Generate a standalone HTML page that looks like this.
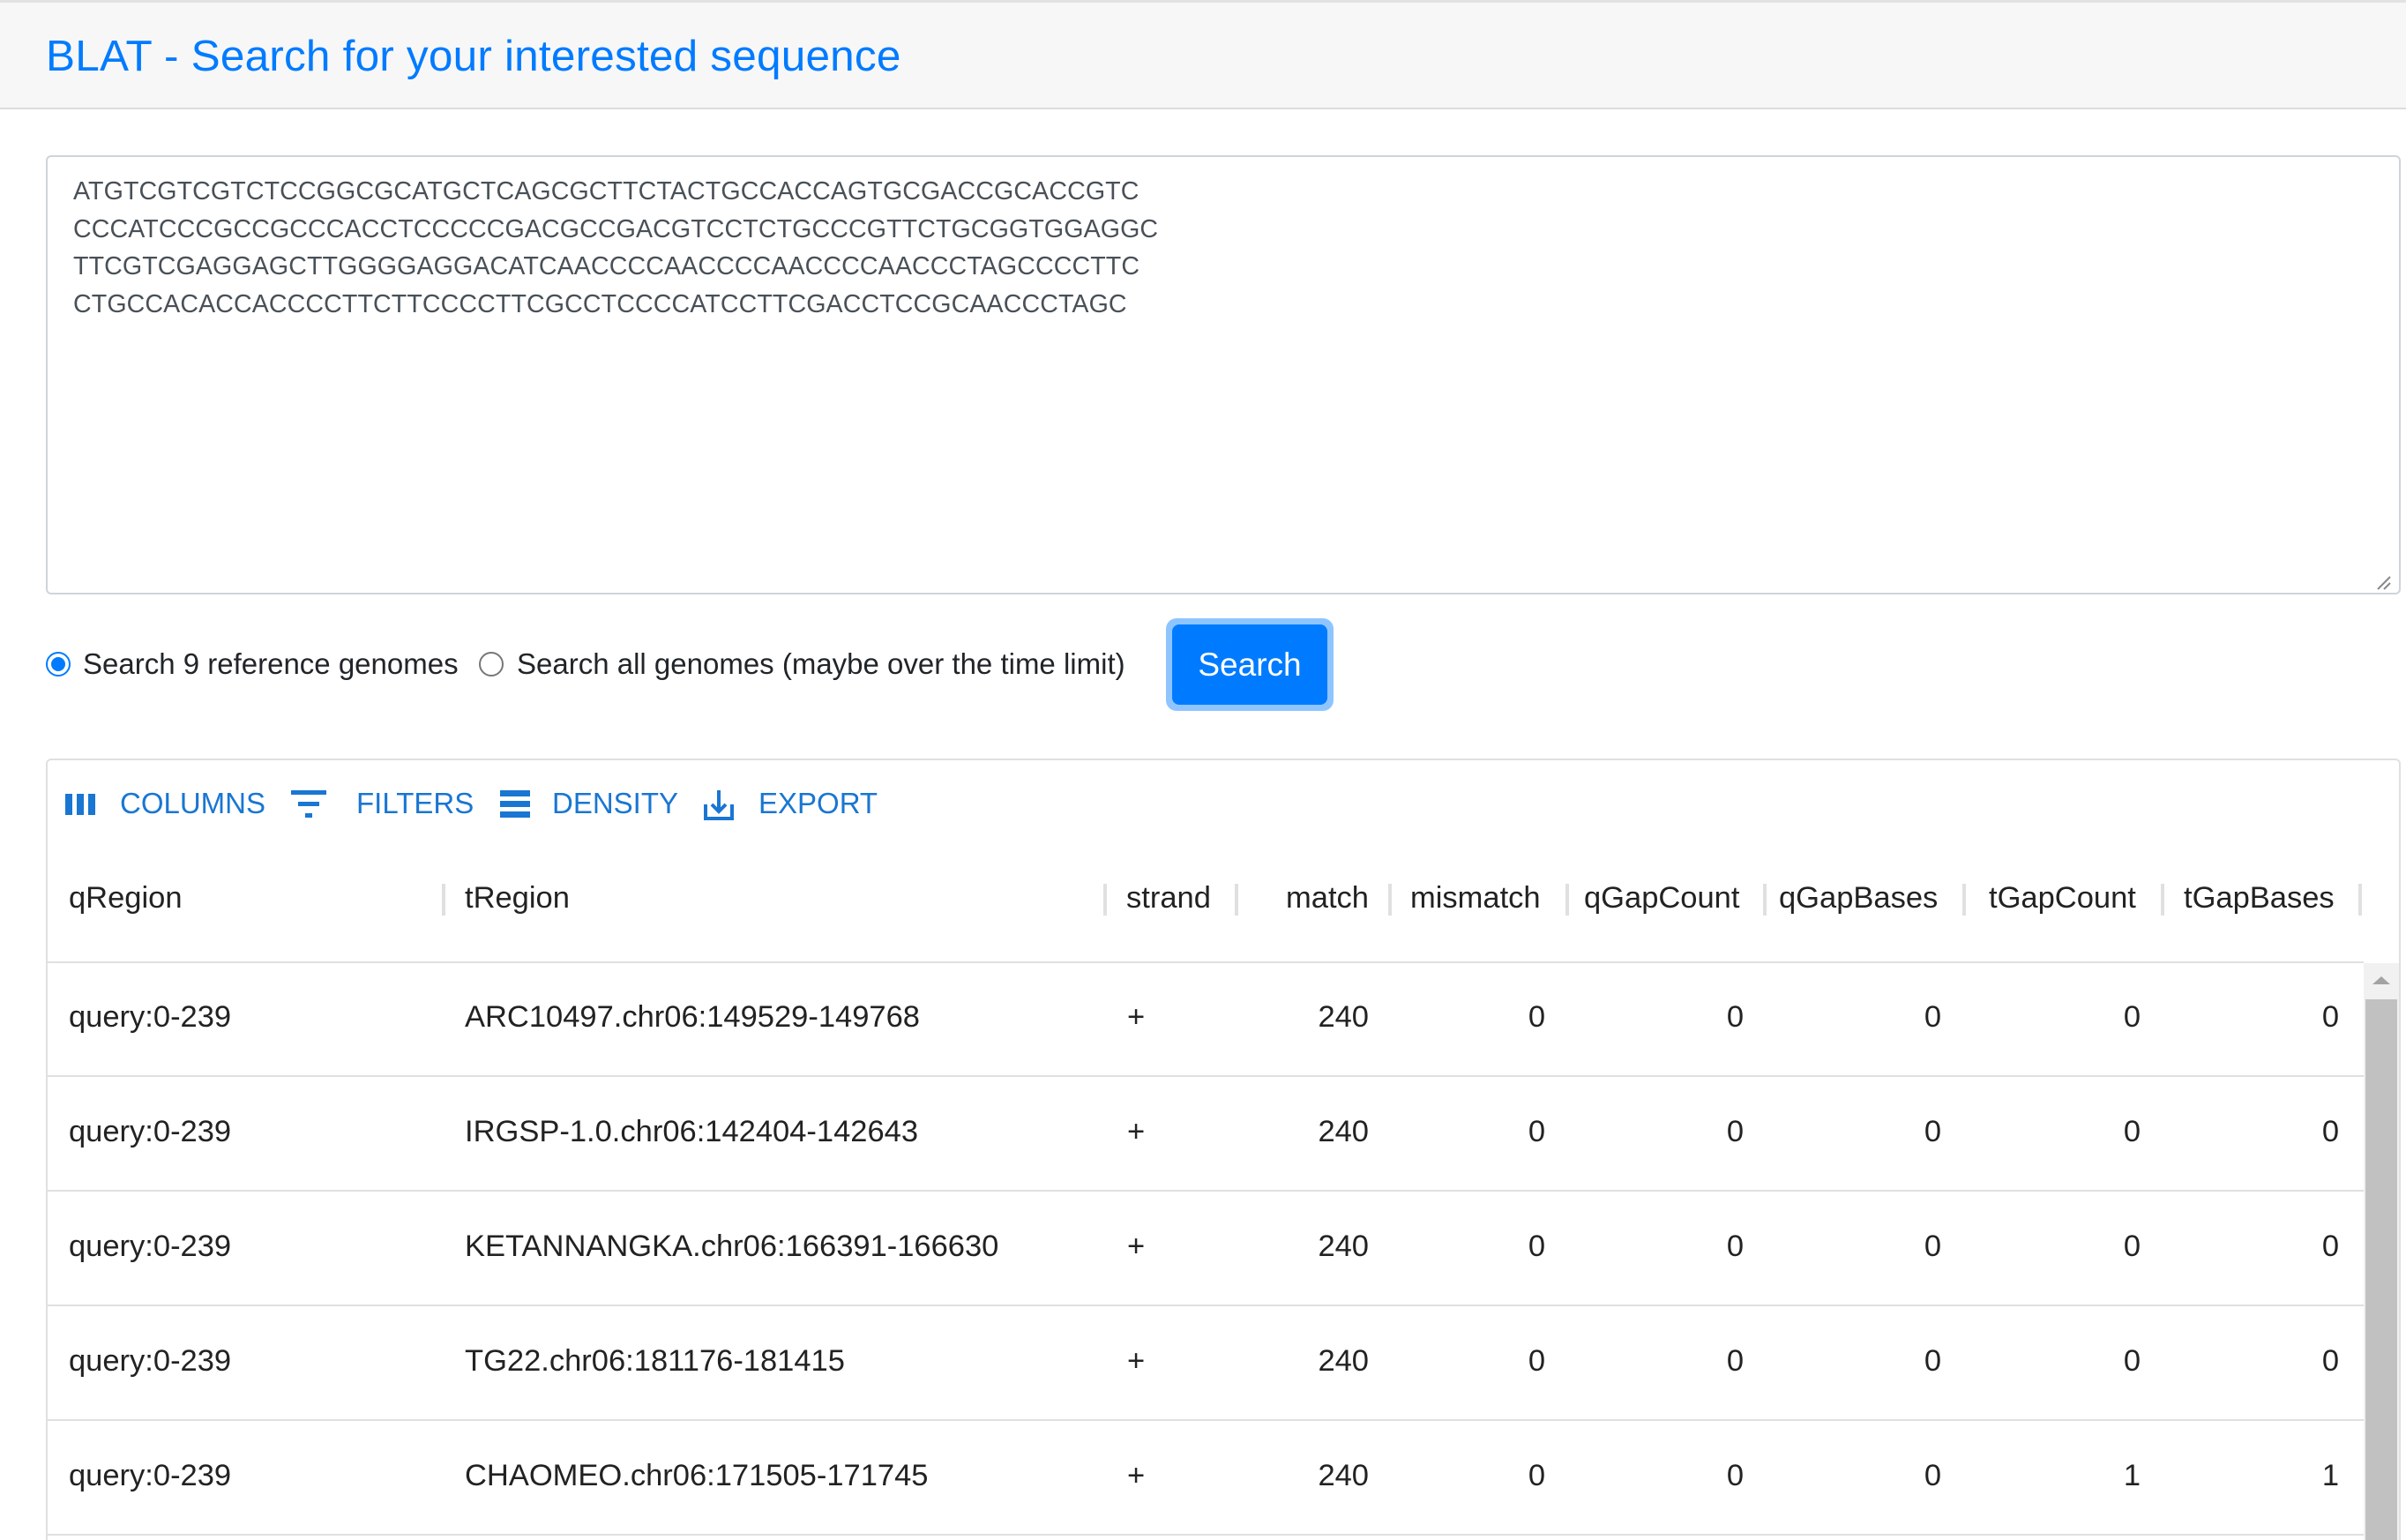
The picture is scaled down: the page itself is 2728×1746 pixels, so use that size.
<!DOCTYPE html>
<html><head><meta charset="utf-8"><style>
*{margin:0;padding:0;box-sizing:border-box}
html,body{width:2728px;height:1746px;overflow:hidden}
body{background:#fff;font-family:"Liberation Sans",sans-serif;position:relative}
.a{position:absolute;white-space:nowrap}
.hdr{left:0;top:0;width:2728px;height:124px;background:#f7f7f7;border-top:3px solid #e2e2e2;border-bottom:2px solid #dcdcdc}
.title{left:52px;top:35px;font-size:49.5px;color:#007bff;letter-spacing:0.2px}
.ta{left:52px;top:176px;width:2670px;height:498px;border:2px solid #ced4da;border-radius:6px}
.seq{left:83px;top:196px;font-size:28.6px;line-height:42.5px;color:#495057;letter-spacing:0.1px}
.radio{width:28px;height:28px;border-radius:50%;border:2px solid #777;top:739px}
.lbl{top:734px;font-size:33px;color:#212529}
.btn{left:1322px;top:701px;width:190px;height:105px;border-radius:12px;background:#8ec5ff}
.btn2{left:1329px;top:708px;width:176px;height:91px;border-radius:8px;background:#007bff;color:#fff;font-size:37px;text-align:center;line-height:91px}
.tbl{left:52px;top:860px;width:2670px;height:886px;border:2px solid #e0e0e0;border-bottom:none;border-radius:6px 6px 0 0}
.tb{top:892px;font-size:33px;color:#1976d2}
.th{top:999px;font-size:34.5px;color:#222}
.sep{width:4px;height:36px;background:#e0e0e0;top:1002px}
.hl{left:54px;width:2626px;height:2px;background:#e0e0e0}
.td{font-size:34.5px;color:#222}
.r{text-align:right}
</style></head><body>
<div class="a hdr"></div>
<div class="a title">BLAT - Search for your interested sequence</div>
<div class="a ta"></div>
<div class="a seq">ATGTCGTCGTCTCCGGCGCATGCTCAGCGCTTCTACTGCCACCAGTGCGACCGCACCGTC<br>CCCATCCCGCCGCCCACCTCCCCCGACGCCGACGTCCTCTGCCCGTTCTGCGGTGGAGGC<br>TTCGTCGAGGAGCTTGGGGAGGACATCAACCCCAACCCCAACCCCAACCCTAGCCCCTTC<br>CTGCCACACCACCCCTTCTTCCCCTTCGCCTCCCCATCCTTCGACCTCCGCAACCCTAGC</div>
<svg class="a" style="left:2694px;top:652px" width="18" height="18"><path d="M2 16L16 2M9 16L16 9" stroke="#888" stroke-width="2"/></svg>
<div class="a radio" style="left:52px;border-color:#007bff"><div style="position:absolute;left:4px;top:4px;width:16px;height:16px;border-radius:50%;background:#007bff"></div></div>
<div class="a lbl" style="left:94px">Search 9 reference genomes</div>
<div class="a radio" style="left:543px"></div>
<div class="a lbl" style="left:586px">Search all genomes (maybe over the time limit)</div>
<div class="a btn"></div>
<div class="a btn2">Search</div>
<div class="a tbl"></div>
<svg class="a" style="left:72px;top:897px" width="40" height="30"><rect x="2" y="3" width="8" height="24" fill="#1976d2"/><rect x="15" y="3" width="8" height="24" fill="#1976d2"/><rect x="28" y="3" width="8" height="24" fill="#1976d2"/></svg>
<div class="a tb" style="left:136px">COLUMNS</div>
<svg class="a" style="left:328px;top:894px" width="44" height="36"><rect x="2" y="2" width="40" height="5" fill="#1976d2"/><rect x="10" y="15" width="24" height="5" fill="#1976d2"/><rect x="18" y="28" width="8" height="5" fill="#1976d2"/></svg>
<div class="a tb" style="left:404px">FILTERS</div>
<svg class="a" style="left:565px;top:894px" width="40" height="36"><rect x="2" y="2" width="34" height="7" fill="#1976d2"/><rect x="2" y="14" width="34" height="7" fill="#1976d2"/><rect x="2" y="26" width="34" height="7" fill="#1976d2"/></svg>
<div class="a tb" style="left:626px">DENSITY</div>
<svg class="a" style="left:796px;top:892px" width="40" height="40"><path d="M4 20V36H34V20M19 4V28M11 20L19 28L27 20" stroke="#1976d2" stroke-width="4" fill="none"/></svg>
<div class="a tb" style="left:860px">EXPORT</div>

<div class="a th" style="left:78px">qRegion</div>
<div class="a sep" style="left:501px"></div>
<div class="a th" style="left:527px">tRegion</div>
<div class="a sep" style="left:1251px"></div>
<div class="a th" style="left:1277px">strand</div>
<div class="a sep" style="left:1400px"></div>
<div class="a th r" style="left:1400px;width:152px">match</div>
<div class="a sep" style="left:1574px"></div>
<div class="a th" style="left:1599px">mismatch</div>
<div class="a sep" style="left:1775px"></div>
<div class="a th" style="left:1796px">qGapCount</div>
<div class="a sep" style="left:1999px"></div>
<div class="a th" style="left:2017px">qGapBases</div>
<div class="a sep" style="left:2225px"></div>
<div class="a th" style="left:2255px">tGapCount</div>
<div class="a sep" style="left:2450px"></div>
<div class="a th" style="left:2476px">tGapBases</div>
<div class="a sep" style="left:2674px"></div>
<div class="a hl" style="top:1090px"></div>
<div class="a hl" style="top:1219px"></div>
<div class="a hl" style="top:1349px"></div>
<div class="a hl" style="top:1479px"></div>
<div class="a hl" style="top:1609px"></div>
<div class="a hl" style="top:1739px"></div>
<div class="a" style="left:2680px;top:1092px;width:40px;height:654px;background:#f1f1f1"></div>
<div class="a" style="left:2682px;top:1133px;width:36px;height:613px;background:#c1c1c1"></div>
<svg class="a" style="left:2688px;top:1104px" width="24" height="14"><path d="M2 12L12 3L22 12Z" fill="#a3a3a3"/></svg>

<div style="position:absolute;left:0;top:1134px">
<div class="a td" style="left:78px;top:0">query:0-239</div><div class="a td" style="left:527px;top:0">ARC10497.chr06:149529-149768</div>
<div class="a td" style="left:1278px;top:0">+</div>
<div class="a td r" style="left:1452px;width:100px;top:0">240</div><div class="a td r" style="left:1652px;width:100px;top:0">0</div><div class="a td r" style="left:1877px;width:100px;top:0">0</div><div class="a td r" style="left:2101px;width:100px;top:0">0</div><div class="a td r" style="left:2327px;width:100px;top:0">0</div><div class="a td r" style="left:2552px;width:100px;top:0">0</div>
</div>
<div style="position:absolute;left:0;top:1264px">
<div class="a td" style="left:78px;top:0">query:0-239</div><div class="a td" style="left:527px;top:0">IRGSP-1.0.chr06:142404-142643</div>
<div class="a td" style="left:1278px;top:0">+</div>
<div class="a td r" style="left:1452px;width:100px;top:0">240</div><div class="a td r" style="left:1652px;width:100px;top:0">0</div><div class="a td r" style="left:1877px;width:100px;top:0">0</div><div class="a td r" style="left:2101px;width:100px;top:0">0</div><div class="a td r" style="left:2327px;width:100px;top:0">0</div><div class="a td r" style="left:2552px;width:100px;top:0">0</div>
</div>
<div style="position:absolute;left:0;top:1394px">
<div class="a td" style="left:78px;top:0">query:0-239</div><div class="a td" style="left:527px;top:0">KETANNANGKA.chr06:166391-166630</div>
<div class="a td" style="left:1278px;top:0">+</div>
<div class="a td r" style="left:1452px;width:100px;top:0">240</div><div class="a td r" style="left:1652px;width:100px;top:0">0</div><div class="a td r" style="left:1877px;width:100px;top:0">0</div><div class="a td r" style="left:2101px;width:100px;top:0">0</div><div class="a td r" style="left:2327px;width:100px;top:0">0</div><div class="a td r" style="left:2552px;width:100px;top:0">0</div>
</div>
<div style="position:absolute;left:0;top:1524px">
<div class="a td" style="left:78px;top:0">query:0-239</div><div class="a td" style="left:527px;top:0">TG22.chr06:181176-181415</div>
<div class="a td" style="left:1278px;top:0">+</div>
<div class="a td r" style="left:1452px;width:100px;top:0">240</div><div class="a td r" style="left:1652px;width:100px;top:0">0</div><div class="a td r" style="left:1877px;width:100px;top:0">0</div><div class="a td r" style="left:2101px;width:100px;top:0">0</div><div class="a td r" style="left:2327px;width:100px;top:0">0</div><div class="a td r" style="left:2552px;width:100px;top:0">0</div>
</div>
<div style="position:absolute;left:0;top:1654px">
<div class="a td" style="left:78px;top:0">query:0-239</div><div class="a td" style="left:527px;top:0">CHAOMEO.chr06:171505-171745</div>
<div class="a td" style="left:1278px;top:0">+</div>
<div class="a td r" style="left:1452px;width:100px;top:0">240</div><div class="a td r" style="left:1652px;width:100px;top:0">0</div><div class="a td r" style="left:1877px;width:100px;top:0">0</div><div class="a td r" style="left:2101px;width:100px;top:0">0</div><div class="a td r" style="left:2327px;width:100px;top:0">1</div><div class="a td r" style="left:2552px;width:100px;top:0">1</div>
</div>
</body></html>
